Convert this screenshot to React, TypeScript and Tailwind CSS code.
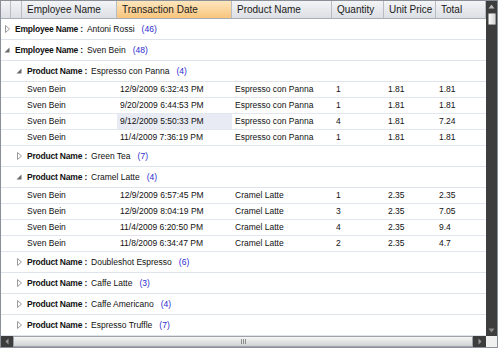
import type { ReactNode } from 'react';

type Sale = { date: string; product: string; qty: string; price: string; total: string; selected?: boolean };
type ProductGroup = { name: string; count: number; rows?: Sale[] };

const espresso: Sale[] = [
  { date: '12/9/2009 6:32:43 PM', product: 'Espresso con Panna', qty: '1', price: '1.81', total: '1.81' },
  { date: '9/20/2009 6:44:53 PM', product: 'Espresso con Panna', qty: '1', price: '1.81', total: '1.81' },
  { date: '9/12/2009 5:50:33 PM', product: 'Espresso con Panna', qty: '4', price: '1.81', total: '7.24', selected: true },
  { date: '11/4/2009 7:36:19 PM', product: 'Espresso con Panna', qty: '1', price: '1.81', total: '1.81' },
];

const latte: Sale[] = [
  { date: '12/9/2009 6:57:45 PM', product: 'Cramel Latte', qty: '1', price: '2.35', total: '2.35' },
  { date: '12/9/2009 8:04:19 PM', product: 'Cramel Latte', qty: '3', price: '2.35', total: '7.05' },
  { date: '11/4/2009 6:20:50 PM', product: 'Cramel Latte', qty: '4', price: '2.35', total: '9.4' },
  { date: '11/8/2009 6:34:47 PM', product: 'Cramel Latte', qty: '2', price: '2.35', total: '4.7' },
];

const products: ProductGroup[] = [
  { name: 'Espresso con Panna', count: 4, rows: espresso },
  { name: 'Green Tea', count: 7 },
  { name: 'Cramel Latte', count: 4, rows: latte },
  { name: 'Doubleshot Espresso', count: 6 },
  { name: 'Caffe Latte', count: 3 },
  { name: 'Caffe Americano', count: 4 },
  { name: 'Espresso Truffle', count: 7 },
];

function Arrow({ open }: { open: boolean }) {
  return open ? (
    <svg width="6" height="6" viewBox="0 0 6 6" className="shrink-0">
      <path d="M5.5 0.5 L5.5 5.5 L0.5 5.5 Z" fill="#6b6b6b" />
    </svg>
  ) : (
    <svg width="5" height="8" viewBox="0 0 5 8" className="shrink-0">
      <path d="M0.5 0.5 L4.5 4 L0.5 7.5 Z" fill="#ffffff" stroke="#9a9a9a" strokeWidth="1" />
    </svg>
  );
}

function GroupRow({ label, value, count, open, indent }: { label: string; value: string; count: number; open: boolean; indent: string }) {
  return (
    <div className={`flex h-[21px] shrink-0 items-center border-b border-[#dfe3ea] ${indent}`}>
      <Arrow open={open} />
      <span className="ml-[5px] font-bold tracking-[-0.2px]">{label} :</span>
      <span className="ml-[4px]">{value}</span>
      <span className="ml-[7px] text-[#2b2bd0]">({count})</span>
    </div>
  );
}

function HeadCell({ w, children, hot }: { w: string; children?: ReactNode; hot?: boolean }) {
  return (
    <div
      className={`${w} flex h-full shrink-0 items-center border-r border-[#b8bcc4] pl-[5px] ${
        hot ? 'bg-gradient-to-b from-[#fde6bd] to-[#f8c57c]' : 'bg-gradient-to-b from-[#f3f4f6] to-[#dcdfe4]'
      }`}
    >
      {children}
    </div>
  );
}

function DataRow({ r }: { r: Sale }) {
  return (
    <div className="flex h-[16px] shrink-0 items-center border-b border-[#e2e6ee]">
      <div className="w-[21px] shrink-0" />
      <div className="w-[95px] shrink-0 pl-[5px]">Sven Bein</div>
      <div className={`flex h-full w-[115px] shrink-0 items-center pl-[3px] ${r.selected ? 'bg-[#e8ebf4]' : ''}`}>{r.date}</div>
      <div className="w-[100px] shrink-0 pl-[3px]">{r.product}</div>
      <div className="w-[52px] shrink-0 pl-[4px]">{r.qty}</div>
      <div className="w-[52px] shrink-0 pl-[4px]">{r.price}</div>
      <div className="w-[50px] shrink-0 pl-[3px]">{r.total}</div>
    </div>
  );
}

export default function App() {
  return (
    <div className="h-[351px] w-[500px] bg-white" style={{ fontFamily: '"Liberation Sans", Arial, sans-serif' }}>
      <div className="flex h-[348px] w-[498px] flex-col overflow-hidden border border-[#8a8f98] text-[8.5px] text-[#111]">
        <div className="flex min-h-0 flex-1">
          <div className="flex min-w-0 flex-1 flex-col overflow-hidden">
            <div className="flex h-[18px] shrink-0 border-b border-[#a9aeb6] text-[10px] text-[#1a1a1a]">
              <HeadCell w="w-[10px]" />
              <HeadCell w="w-[11px]" />
              <HeadCell w="w-[95px]">Employee Name</HeadCell>
              <HeadCell w="w-[115px]" hot>Transaction Date</HeadCell>
              <HeadCell w="w-[100px]">Product Name</HeadCell>
              <HeadCell w="w-[52px]">Quantity</HeadCell>
              <HeadCell w="w-[52px]">Unit Price</HeadCell>
              <HeadCell w="w-[50px]">Total</HeadCell>
            </div>

            <GroupRow label="Employee Name" value="Antoni Rossi" count={46} open={false} indent="pl-[4px]" />
            <GroupRow label="Employee Name" value="Sven Bein" count={48} open indent="pl-[3px]" />

            {products.map((p) => (
              <div key={p.name} className="flex flex-col">
                <GroupRow label="Product Name" value={p.name} count={p.count} open={!!p.rows} indent={p.rows ? 'pl-[15px]' : 'pl-[16px]'} />
                {p.rows?.map((r) => <DataRow key={r.date} r={r} />)}
              </div>
            ))}
          </div>

          <div className="flex w-[11px] shrink-0 flex-col items-center bg-[#3d3d3d] py-[3px]">
            <svg width="7" height="5" viewBox="0 0 7 5">
              <path d="M0.5 4.5 L3.5 0.5 L6.5 4.5 Z" fill="#b9b9b9" />
            </svg>
            <div className="mt-[4px] h-[12px] w-[8px] rounded-[1px] border border-[#9a9a9a] bg-gradient-to-r from-[#f7f7f7] to-[#d6d6d6]" />
            <div className="flex-1" />
            <svg width="7" height="5" viewBox="0 0 7 5">
              <path d="M0.5 0.5 L3.5 4.5 L6.5 0.5 Z" fill="#8a8a8a" />
            </svg>
          </div>
        </div>

        <div className="flex h-[11px] shrink-0">
          <div className="flex min-w-0 flex-1">
            <div className="flex w-[12px] shrink-0 items-center justify-center bg-[#3d3d3d]">
              <svg width="4" height="7" viewBox="0 0 4 7">
                <path d="M3.5 0.5 L0.5 3.5 L3.5 6.5 Z" fill="#9a9a9a" />
              </svg>
            </div>
            <div className="flex flex-1 items-center justify-center border border-[#9ea3aa] bg-gradient-to-b from-[#f6f6f6] to-[#cfd1d4]">
              <div className="flex gap-[1px]">
                <div className="h-[5px] w-[1px] bg-[#8c8c8c]" />
                <div className="h-[5px] w-[1px] bg-[#8c8c8c]" />
                <div className="h-[5px] w-[1px] bg-[#8c8c8c]" />
              </div>
            </div>
            <div className="flex w-[13px] shrink-0 items-center justify-center bg-[#3d3d3d]">
              <svg width="4" height="7" viewBox="0 0 4 7">
                <path d="M0.5 0.5 L3.5 3.5 L0.5 6.5 Z" fill="#9a9a9a" />
              </svg>
            </div>
          </div>
          <div className="w-[11px] shrink-0 bg-[#f0f0f0]" />
        </div>
      </div>
    </div>
  );
}
